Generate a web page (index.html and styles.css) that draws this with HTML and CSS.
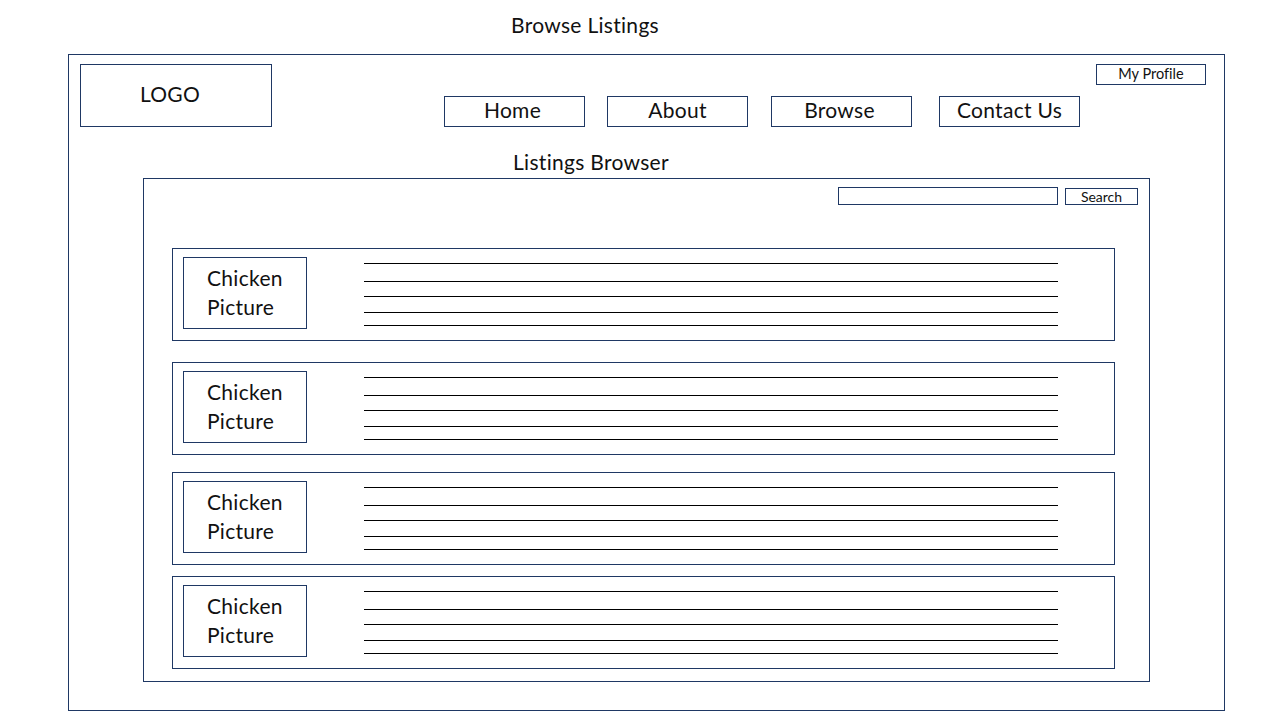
FILE: index.html
```html
<!DOCTYPE html>
<html>
<head>
<meta charset="utf-8">
<link rel="stylesheet" href="styles.css">
</head>
<body>
<h1 class="page-title">Browse Listings</h1>
<div class="frame">
  <header class="header">
    <div class="logo">LOGO</div>
    <nav class="nav">
      <a class="nav-btn">Home</a>
      <a class="nav-btn">About</a>
      <a class="nav-btn">Browse</a>
      <a class="nav-btn">Contact Us</a>
    </nav>
    <a class="profile">My Profile</a>
  </header>
  <h2 class="section-title">Listings Browser</h2>
  <section class="panel">
    <div class="search-row">
      <div class="search-input"></div>
      <div class="search-btn">Search</div>
    </div>
    <div class="cards">
      <div class="card">
        <div class="pic">Chicken<br>Picture</div>
        <div class="lines"><i></i><i></i><i></i><i></i><i></i></div>
      </div>
      <div class="card">
        <div class="pic">Chicken<br>Picture</div>
        <div class="lines"><i></i><i></i><i></i><i></i><i></i></div>
      </div>
      <div class="card">
        <div class="pic">Chicken<br>Picture</div>
        <div class="lines"><i></i><i></i><i></i><i></i><i></i></div>
      </div>
      <div class="card">
        <div class="pic">Chicken<br>Picture</div>
        <div class="lines"><i></i><i></i><i></i><i></i><i></i></div>
      </div>
    </div>
  </section>
</div>
</body>
</html>
```
FILE: styles.css
```css
* { box-sizing: border-box; }
html, body { margin: 0; padding: 0; background: #fff; }
body {
  font-family: "Lato", "Open Sans", sans-serif;
  color: #111;
  width: 1280px;
  height: 720px;
  overflow: hidden;
  font-variant-ligatures: none;
}
.page-title {
  margin: 0;
  height: 54px;
  padding: 12px 0 0 511px;
  font-size: 21px;
  letter-spacing: 0.3px;
  font-weight: 400;
  line-height: 26px;
}
.frame {
  margin-left: 68px;
  width: 1157px;
  height: 657px;
  border: 1px solid #1f3864;
  padding: 9px 18px 0 11px;
}
.header {
  display: flex;
  align-items: flex-start;
  height: 87px;
}
.logo {
  width: 192px;
  height: 63px;
  border: 1px solid #1f3864;
  display: flex;
  align-items: center;
  justify-content: center;
  font-size: 21px;
  letter-spacing: 0.3px;
  padding-bottom: 5px;
  padding-right: 12px;
}
.nav {
  display: flex;
  margin-left: 172px;
  margin-top: 32px;
}
.nav-btn {
  width: 141px;
  height: 31px;
  border: 1px solid #1f3864;
  display: flex;
  align-items: center;
  justify-content: center;
  font-size: 21px;
  letter-spacing: 0.3px;
  padding-bottom: 5px;
}
.nav-btn:nth-child(1) { margin-right: 22px; padding-right: 4px; }
.nav-btn:nth-child(2) { margin-right: 23px; }
.nav-btn:nth-child(3) { margin-right: 27px; padding-right: 4px; }
.profile {
  margin-left: auto;
  width: 110px;
  height: 21px;
  border: 1px solid #1f3864;
  display: flex;
  align-items: center;
  justify-content: center;
  font-size: 14.5px;
  padding-bottom: 2px;
}
.section-title {
  margin: 0;
  height: 27px;
  padding-left: 433px;
  font-size: 21px;
  letter-spacing: 0.3px;
  font-weight: 400;
  line-height: 22px;
}
.panel {
  margin-left: 63px;
  width: 1007px;
  height: 504px;
  border: 1px solid #1f3864;
  padding: 8px 11px 0 28px;
}
.search-row {
  display: flex;
  justify-content: flex-end;
  gap: 7px;
  height: 61px;
}
.search-input {
  width: 220px;
  height: 18px;
  border: 1px solid #1f3864;
}
.search-btn {
  width: 73px;
  height: 17px;
  margin-top: 1px;
  border: 1px solid #1f3864;
  display: flex;
  align-items: center;
  justify-content: center;
  font-size: 14px;
  padding-bottom: 1px;
}
.cards {
  display: flex;
  flex-direction: column;
  width: 943px;
}
.card {
  height: 93px;
  border: 1px solid #1f3864;
  display: flex;
  align-items: flex-start;
  padding: 8px 0 0 10px;
}
.card:nth-child(2) { margin-top: 21px; }
.card:nth-child(3) { margin-top: 17px; }
.card:nth-child(4) { margin-top: 11px; }
.pic {
  width: 124px;
  height: 72px;
  border: 1px solid #1f3864;
  padding: 5px 0 0 23px;
  font-size: 21px;
  letter-spacing: 0.3px;
  line-height: 29px;
}
.lines {
  display: flex;
  flex-direction: column;
  width: 694px;
  margin-left: 57px;
  margin-top: 6px;
}
.lines i {
  display: block;
  height: 0;
  border-top: 1px solid #000;
}
.lines i:nth-child(2) { margin-top: 17px; }
.lines i:nth-child(3) { margin-top: 14px; }
.lines i:nth-child(4) { margin-top: 15px; }
.lines i:nth-child(5) { margin-top: 12px; }
```
